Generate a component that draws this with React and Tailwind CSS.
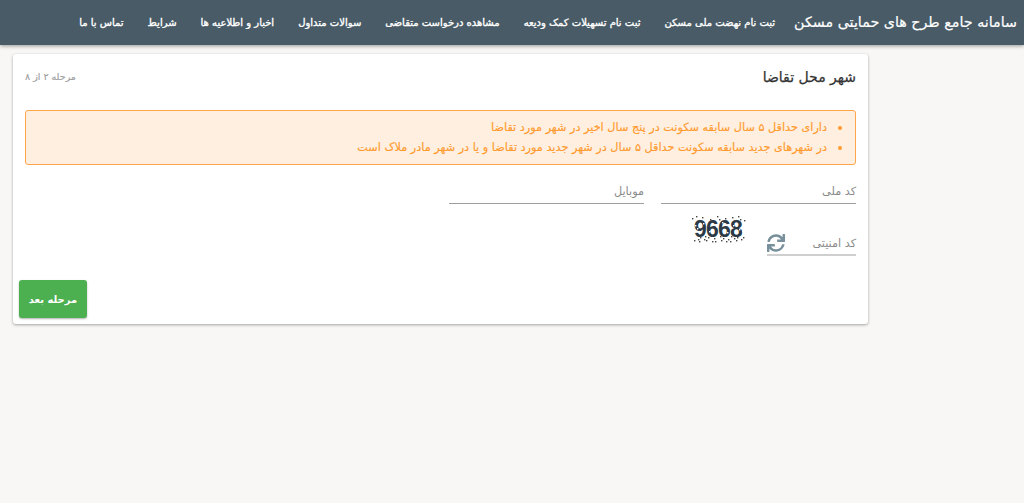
import React from "react";
import { FaSync } from "react-icons/fa";

const navItems = [
  "ثبت نام نهضت ملی مسکن",
  "ثبت نام تسهیلات کمک ودیعه",
  "مشاهده درخواست متقاضی",
  "سوالات متداول",
  "اخبار و اطلاعیه ها",
  "شرایط",
  "تماس با ما",
];

const notes = [
  "دارای حداقل ۵ سال سابقه سکونت در پنج سال اخیر در شهر مورد تقاضا",
  "در شهرهای جدید سابقه سکونت حداقل ۵ سال در شهر جدید مورد تقاضا و یا در شهر مادر ملاک است",
];

const noise = [
  [2, 4], [5, 11], [3, 20], [8, 25], [12, 3], [16, 26], [20, 5], [24, 24], [27, 2], [31, 26],
  [35, 4], [38, 25], [42, 3], [46, 26], [50, 5], [53, 23], [55, 10], [1, 14], [10, 23], [22, 27],
  [33, 24], [44, 24], [6, 2], [18, 23], [29, 5], [40, 27], [48, 2], [52, 17], [4, 26], [14, 25],
  [7, 14], [13, 9], [19, 17], [26, 12], [32, 8], [37, 18], [43, 11], [49, 15], [9, 27], [25, 27],
  [36, 27], [47, 23], [0, 8], [54, 6], [15, 22], [30, 22], [41, 22], [51, 25],
];

const Field = ({ label, className }) => (
  <div className={`h-[37px] border-b border-[#9e9e9e] text-[11.25px] leading-[20px] text-[#8a8a8a] ${className}`}>
    {label}
  </div>
);

const App = () => {
  return (
    <div
      dir="rtl"
      className="min-h-[503px] bg-[#f8f7f6] font-['DejaVu_Sans','Noto_Sans',sans-serif] text-[#333]"
    >
      {/* Header */}
      <header className="flex h-[45px] items-center bg-[#485b67] pr-[7px] text-white shadow-[0_1px_4px_rgba(0,0,0,0.4)]">
        <div className="text-[14.25px] whitespace-nowrap [-webkit-text-stroke:0.2px_white]">
          سامانه جامع طرح های حمایتی مسکن
        </div>
        <nav className="mr-[19px] flex gap-[24px] text-[10px] whitespace-nowrap [-webkit-text-stroke:0.35px_white]">
          {navItems.map((item) => (
            <span key={item}>{item}</span>
          ))}
        </nav>
      </header>

      {/* Card */}
      <main className="mr-[156px] ml-[13px] pt-[9px]">
        <div className="h-[270px] rounded-[3px] bg-white shadow-[0_1px_3px_rgba(0,0,0,0.35)]">
          <div className="flex items-center justify-between pt-[13px] pr-[12px] pl-[12px]">
            <h1 className="text-[14px] leading-[20px] font-normal text-[#333] [-webkit-text-stroke:0.25px_#333]">
              شهر محل تقاضا
            </h1>
            <span className="text-[9.5px] text-[#9e9e9e] [-webkit-text-stroke:0.15px_#9e9e9e]">مرحله ۲ از ۸</span>
          </div>

          <div className="mx-[12px] mt-[23px] h-[55px] rounded-[3px] border border-[#ffa64d] bg-[#ffefe0] pt-[7px] pr-[13px] text-[11.25px] leading-[20px] text-[#ff9a2e] [-webkit-text-stroke:0.15px_#ff9a2e]">
            <ul>
              {notes.map((note) => (
                <li key={note} className="flex items-center gap-[11px]">
                  <span className="size-[4px] rounded-full bg-[#ff9a2e]" />
                  <span>{note}</span>
                </li>
              ))}
            </ul>
          </div>

          <div className="mt-[2px] flex gap-[17px] pr-[12px]">
            <Field label="کد ملی" className="w-[195px] pt-[15px]" />
            <Field label="موبایل" className="w-[195px] pt-[15px]" />
          </div>

          <div className="mt-[10px] flex items-start pr-[12px]">
            <div className="flex h-[42px] w-[89px] items-end justify-between border-b-2 border-[#cfcfcf] pb-[2px] text-[11.25px] text-[#8a8a8a]">
              <span className="mb-[-1px]">کد امنیتی</span>
              <FaSync className="text-[18px] text-[#78909c]" />
            </div>
            <div className="relative mr-[21px] h-[29px] w-[56px]" dir="ltr">
              <span className="block pt-[1px] text-center font-['Liberation_Sans',sans-serif] text-[23px] leading-[29px] font-bold tracking-[-0.8px] text-[#2b3a46]">
                9668
              </span>
              <svg className="absolute inset-0" width="56" height="29" viewBox="0 0 56 29">
                {noise.map(([x, y]) => (
                  <rect key={`${x}-${y}`} x={x} y={y} width="1.4" height="1.4" fill={y > 7 && y < 22 ? "#ffffff" : "#444444"} />
                ))}
              </svg>
            </div>
          </div>

          <div className="mt-[24px] flex justify-end pl-[6px]">
            <button className="h-[38px] w-[68px] rounded-[3px] bg-[#4caf50] text-[10px] font-bold text-white shadow-[0_1px_2px_rgba(0,0,0,0.3)]">
              مرحله بعد
            </button>
          </div>
        </div>
      </main>
    </div>
  );
};

export default App;
